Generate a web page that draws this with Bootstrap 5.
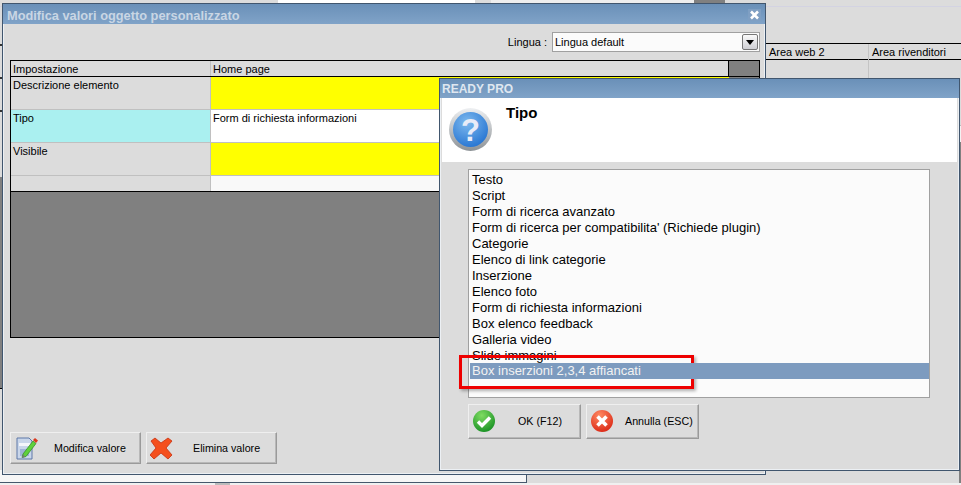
<!DOCTYPE html>
<html lang="it">
<head>
<meta charset="utf-8">
<title>Modifica valori oggetto personalizzato</title>
<link href="https://cdn.jsdelivr.net/npm/bootstrap@5.3.0/dist/css/bootstrap.min.css" rel="stylesheet">
<style>
html,body{margin:0;height:100%;overflow:hidden}
body{background:#dcdcdc;font-family:"Liberation Sans",Arial,sans-serif;font-size:11px;color:#000;line-height:1.2}
.desk{position:relative;width:961px;height:485px;overflow:hidden;background:#dcdcdc}
/* back windows: free canvas */
.topstrip{position:absolute;left:0;top:0;width:961px;height:7px;border-bottom:1px solid #d3d3e2}
.topwhite{position:absolute;left:278px;top:0;width:197px;height:3px;background:#fff}
.topcell{position:absolute;left:491px;top:0;width:203px;height:3px;background:#eee}
.topdark{position:absolute;left:694px;top:0;width:31px;height:3px;background:#808080}
.leftgrey{position:absolute;left:0;top:177px;width:2px;height:212px;background:#808080;border-bottom:1px solid #000}
.leftmarks{position:absolute;left:0;top:22px;width:2px;height:120px;background:repeating-linear-gradient(#dcdcdc 0 22px,#333 22px 24px,#dcdcdc 24px 33px)}
.backhead{position:absolute;left:766px;top:43px;width:195px;height:17px;border-top:1px solid #000;border-bottom:1px solid #000;font-size:11px}
.backhead span{position:absolute;top:1px;line-height:15px}
.backcol{position:absolute;left:868px;top:44px;width:1px;height:34px;background:#c4c4c4}
.edgelight{position:absolute;left:959px;top:125px;width:2px;height:17px;background:#f3f3f3;border-top:1px solid #bbb}
.edgedark{position:absolute;left:959px;top:142px;width:2px;height:343px;background:#808080}
.thirdwin{position:absolute;left:-2px;top:470px;width:529px;height:13px;background:#f6f6f6;border:solid #46586c;border-width:0 1px 1px 0}
.baseline{position:absolute;left:0;top:483px;width:961px;height:2px;background:#f0f0f0}
.basemark{position:absolute;left:215px;top:483px;width:15px;height:2px;background:#bbb}
/* windows */
.win{position:absolute;background:#dcdcdc;border:1px solid #41566e;box-shadow:inset 0 0 0 1px #ecf0f4}
.mainwin{left:2px;top:3px;width:764px;height:472px}
.dlg{left:439px;top:78px;width:521px;height:393px}
.wbar{background:linear-gradient(#6a90b8,#80a3c8);color:#c9d6e4;font-weight:700;position:relative;white-space:nowrap}
.mainwin .wbar{height:20px;font-size:12.8px;line-height:24px;padding-left:4px}
.dlg .wbar{height:19px;font-size:12px;line-height:21px;padding-left:2px;color:#dfe7f0}
.xbtn{position:absolute;left:745px;top:5px;width:13px;height:12px;background:#7f9fc3}
.xbtn svg{display:block}
.langrow{height:36px;padding:8px 5px 0 0;justify-content:flex-end}
.langlbl{font-size:11px;line-height:20px;margin-right:5px}
.langsel{width:208px;height:20px;background:#fbfbfb;border:1px solid #a0a0a0;font-size:11px;line-height:18px;padding-left:2px}
.langbtn{width:16px;height:16px;margin:1px 1px 0 0;background:linear-gradient(#fafafa,#cfcfd4);border:1px solid #777;border-radius:2px;display:flex;align-items:center;justify-content:center}
.grid{margin-left:7px;width:750px;border:1px solid #000;background:#808080;height:278px}
.gridrow{display:flex}
.gridhead{height:16px;line-height:16px;border-bottom:1px solid #000;font-size:11px}
.c1{width:200px;padding-left:2px;background:#dcdcdc;border-right:1px solid #c0c0c0;flex:none}
.c2{width:518px;padding-left:2px;flex:none;background:#dcdcdc}
.gridhead .c2{border-right:1px solid #000}
.tall{height:33px;border-bottom:1px solid #c0c0c0;margin-right:30px;line-height:13px;font-size:11px}
.tall .c1,.tall .c2{padding-top:2px}
.lastrow{height:15px;margin-right:30px}
.yel{background:#ff0}
.wht{background:#fff}
.off{background:#f9f9f9}
.cyan{background:#aaf0f0}
.rowend{height:1px;background:#000;margin-right:0}
.btns{position:absolute;left:7px;bottom:10px;gap:5px}
.wbtn{--bs-btn-border-radius:0;--bs-btn-padding-x:0;--bs-btn-padding-y:0;--bs-btn-font-size:10.7px;--bs-btn-bg:#dcdcdc;--bs-btn-color:#000;--bs-btn-hover-bg:#dcdcdc;--bs-btn-hover-color:#000;
 display:flex;align-items:center;text-align:left;white-space:nowrap;background:#dcdcdc;border:1px solid;border-color:#efefef #9a9a9a #9a9a9a #efefef;box-shadow:inset -1px -1px 0 #b8b8b8;position:relative;line-height:1.2}
.bigb{width:131px;height:32px}
.smallb{width:113px;height:35px}
.wbtn svg{position:absolute}
.whead{height:64px;background:#fff;margin:0 2px 0 2px;position:relative}
.whead .q{position:absolute;left:7px;top:10px}
.whead .ttl{position:absolute;left:64px;top:6px;font-size:15px;font-weight:700;line-height:18px}
.picker{margin:7px 0 0 28px;width:462px;height:229px;border:1px solid #a0a0a0;background:#fbfbfb;padding:2px 0 0 1px;border-radius:0}
.picker .list-group-item{background:transparent;border:0;border-radius:0;padding:0 0 0 2px;height:16px;line-height:15px;font-size:13px;color:#000;white-space:nowrap}
.picker .list-group-item.active{background:#7d9bbf;color:#f2f2f2}
.dlgbtns{margin:6px 0 0 28px;gap:5px}
.redbox{position:absolute;left:19px;top:276px;width:235px;height:34px;border:3px solid #ee0000;box-shadow:2px 2px 3px rgba(0,0,0,.3);pointer-events:none}
</style>
</head>
<body>
<div class="desk">
  <div class="topstrip"></div><div class="topwhite"></div><div class="topcell"></div><div class="topdark"></div>
  <div class="leftmarks"></div><div class="leftgrey"></div>
  <div class="backhead"><span style="left:3px">Area web 2</span><span style="left:106px">Area rivenditori</span></div>
  <div class="backcol"></div>
  <div class="edgelight"></div><div class="edgedark"></div>
  <div class="thirdwin"></div><div class="baseline"></div><div class="basemark"></div>

  <div class="win mainwin">
    <div class="wbar">Modifica valori oggetto personalizzato
      <span class="xbtn"><svg width="13" height="12" viewBox="0 0 13 12"><path d="M3 2.5l7 7M10 2.5l-7 7" stroke="#fff" stroke-width="2.6"/></svg></span>
    </div>
    <div class="langrow d-flex">
      <span class="langlbl">Lingua :</span>
      <div class="langsel d-flex justify-content-between">
        <span>Lingua default</span>
        <span class="langbtn"><svg width="8" height="5" viewBox="0 0 8 5"><path d="M0 0h8L4 5z" fill="#000"/></svg></span>
      </div>
    </div>
    <div class="grid">
      <div class="gridrow gridhead"><div class="c1">Impostazione</div><div class="c2">Home page</div></div>
      <div class="gridrow tall"><div class="c1">Descrizione elemento</div><div class="c2 yel"></div></div>
      <div class="gridrow tall"><div class="c1 cyan">Tipo</div><div class="c2 wht">Form di richiesta informazioni</div></div>
      <div class="gridrow tall"><div class="c1">Visibile</div><div class="c2 yel"></div></div>
      <div class="gridrow lastrow"><div class="c1"></div><div class="c2 off"></div></div>
      <div class="rowend"></div>
    </div>
    <div class="btns d-flex">
      <button type="button" class="btn wbtn bigb">
        <svg style="left:5px;top:3px" width="22" height="24" viewBox="0 0 22 24"><path d="M1 2h12l3 3v18H1z" fill="#c9d6ea" stroke="#5f78a8"/><path d="M3 7h11v3H3z" fill="#f4f6fb"/><path d="M4 13h9v7H4z" fill="#9fb3d6"/><path d="M7 18l10-13 3 2.500-10 13-4 1z" fill="#5fd03c" stroke="#2f8a1e" stroke-width=".7"/><path d="M17 4l2-2 3 2.500-2 2.500z" fill="#d9381e"/><path d="M7 18l-1 4 3-1z" fill="#777"/></svg>
        <span style="margin-left:43px">Modifica valore</span>
      </button>
      <button type="button" class="btn wbtn bigb">
        <svg style="left:3px;top:4px" width="23" height="23" viewBox="0 0 23 23"><path d="M5 1l6 5 7-5 4 3-6 7 6 7-4 4-7-6-7 6-4-4 6-7-5-7z" fill="#f4501e" stroke="#c8300f" stroke-width=".8" stroke-linejoin="round"/></svg>
        <span style="margin-left:46px">Elimina valore</span>
      </button>
    </div>
  </div>

  <div class="win dlg">
    <div class="wbar">READY PRO</div>
    <div class="whead">
      <svg class="q" width="43" height="43" viewBox="0 0 43 43">
        <defs>
          <radialGradient id="qb" cx=".4" cy=".3" r=".8"><stop offset="0" stop-color="#7db9ee"/><stop offset="1" stop-color="#1f6fd0"/></radialGradient>
          <linearGradient id="qr" x1="0" y1="0" x2="0" y2="1"><stop offset="0" stop-color="#eef0f2"/><stop offset="1" stop-color="#8d9296"/></linearGradient>
        </defs>
        <circle cx="21.500" cy="21.500" r="21.500" fill="url(#qr)"/>
        <circle cx="21.500" cy="21.500" r="17.500" fill="url(#qb)"/>
        <text x="21.500" y="32.500" text-anchor="middle" font-family="Liberation Sans,sans-serif" font-weight="700" font-size="31" fill="#e8ecf8">?</text>
      </svg>
      <div class="ttl">Tipo</div>
    </div>
    <div class="picker list-group">
      <div class="list-group-item">Testo</div>
      <div class="list-group-item">Script</div>
      <div class="list-group-item">Form di ricerca avanzato</div>
      <div class="list-group-item">Form di ricerca per compatibilita' (Richiede plugin)</div>
      <div class="list-group-item">Categorie</div>
      <div class="list-group-item">Elenco di link categorie</div>
      <div class="list-group-item">Inserzione</div>
      <div class="list-group-item">Elenco foto</div>
      <div class="list-group-item">Form di richiesta informazioni</div>
      <div class="list-group-item">Box elenco feedback</div>
      <div class="list-group-item">Galleria video</div>
      <div class="list-group-item">Slide immagini</div>
      <div class="list-group-item active">Box inserzioni 2,3,4 affiancati</div>
    </div>
    <div class="dlgbtns d-flex">
      <button type="button" class="btn wbtn smallb">
        <svg style="left:3px;top:4px" width="24" height="24" viewBox="0 0 24 24"><defs><radialGradient id="gb" cx=".4" cy=".25" r=".85"><stop offset="0" stop-color="#7fdc62"/><stop offset="1" stop-color="#0f8a1e"/></radialGradient></defs><circle cx="12" cy="12" r="11" fill="url(#gb)"/><path d="M6 12.500l4 4 8-8" fill="none" stroke="#fff" stroke-width="3.400"/></svg>
        <span style="margin-left:49px">OK (F12)</span>
      </button>
      <button type="button" class="btn wbtn smallb">
        <svg style="left:3px;top:4px" width="24" height="24" viewBox="0 0 24 24"><defs><radialGradient id="rb" cx=".4" cy=".25" r=".85"><stop offset="0" stop-color="#ff8a62"/><stop offset="1" stop-color="#d8200f"/></radialGradient></defs><circle cx="12" cy="12" r="11" fill="url(#rb)"/><path d="M7.500 7.500l9 9M16.500 7.500l-9 9" stroke="#fff" stroke-width="3.600"/></svg>
        <span style="margin-left:38px">Annulla (ESC)</span>
      </button>
    </div>
    <div class="redbox"></div>
  </div>
</div>
<script src="https://cdn.jsdelivr.net/npm/bootstrap@5.3.0/dist/js/bootstrap.bundle.min.js"></script>
</body>
</html>
